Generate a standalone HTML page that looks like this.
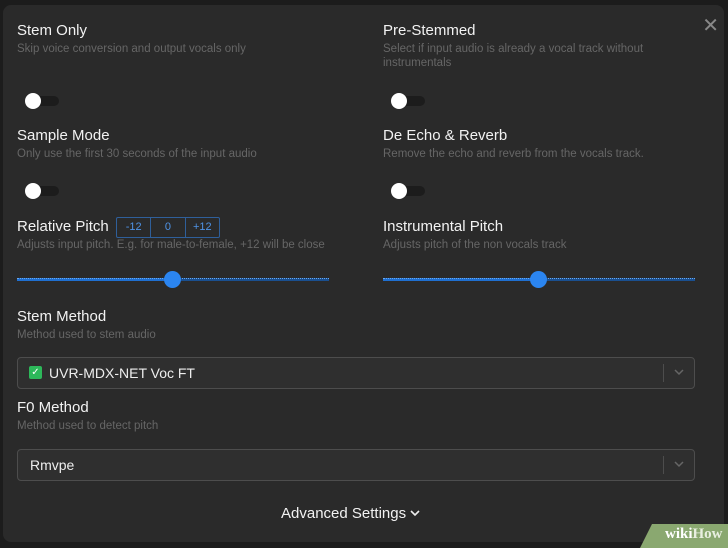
<!DOCTYPE html><html><head><style>
body{margin:0;width:728px;height:546px;background:#1c1c1c;font-family:"Liberation Sans",sans-serif;overflow:hidden;position:relative}
.p{position:absolute;left:3px;top:5px;width:721px;height:537px;background:#2a2a2a;border-radius:8px}
.t{position:absolute;color:#f2f2f2;font-size:15px}
.d{position:absolute;color:#666;font-size:11.5px;line-height:14px}
.tg{position:absolute;width:32px;height:12px}
.tg:before{content:"";position:absolute;left:8px;top:1px;width:26px;height:10px;border-radius:5px;background:#1c1c1c}
.tg:after{content:"";position:absolute;left:0;top:-2px;width:16px;height:16px;border-radius:50%;background:#fff}
.sl{position:absolute;height:2px;border-top:1px dotted #6aa8ef}
.kn{position:absolute;width:17px;height:17px;border-radius:50%;background:#2b85f0}
.sel{position:absolute;left:17px;width:676px;height:30px;border:1px solid #4d4d4d;border-radius:4px;background:#2f2f2f}
.sel .v{position:absolute;left:12px;top:7px;color:#eee;font-size:14px}
.sel .s{position:absolute;right:30px;top:6px;width:1px;height:18px;background:#4d4d4d}
.sel svg{position:absolute;right:10px;top:11px}
</style></head><body><div class="p"></div>
<div style="position:absolute;right:9px;top:16px;color:#888;font-size:20px;line-height:20px">✕</div>
<div class="t" style="left:17px;top:22px">Stem Only</div>
<div class="d" style="left:17px;top:42px">Skip voice conversion and output vocals only</div>
<div class="tg" style="left:25px;top:95px"></div>
<div class="t" style="left:17px;top:127px">Sample Mode</div>
<div class="d" style="left:17px;top:147px">Only use the first 30 seconds of the input audio</div>
<div class="tg" style="left:25px;top:185px"></div>
<div class="t" style="left:17px;top:218px">Relative Pitch</div>
<div style="position:absolute;left:116px;top:217px;width:102px;height:19px;border:1px solid #2f5f9a;border-radius:2px;display:flex;color:#4f93e6;font-size:11px;line-height:19px;text-align:center"><span style="flex:1;border-right:1px solid #2f5f9a">-12</span><span style="flex:1;border-right:1px solid #2f5f9a">0</span><span style="flex:1">+12</span></div>
<div class="d" style="left:17px;top:238px">Adjusts input pitch. E.g. for male-to-female, +12 will be close</div>
<div class="sl" style="left:17px;top:278px;width:312px;background:linear-gradient(90deg,#1f6fd0 50%,#1a4f8f 50%)"></div>
<div class="kn" style="left:164px;top:271px"></div>
<div class="t" style="left:383px;top:22px">Pre-Stemmed</div>
<div class="d" style="left:383px;top:42px">Select if input audio is already a vocal track without<br>instrumentals</div>
<div class="tg" style="left:391px;top:95px"></div>
<div class="t" style="left:383px;top:127px">De Echo &amp; Reverb</div>
<div class="d" style="left:383px;top:147px">Remove the echo and reverb from the vocals track.</div>
<div class="tg" style="left:391px;top:185px"></div>
<div class="t" style="left:383px;top:218px">Instrumental Pitch</div>
<div class="d" style="left:383px;top:238px">Adjusts pitch of the non vocals track</div>
<div class="sl" style="left:383px;top:278px;width:312px;background:linear-gradient(90deg,#1f6fd0 50%,#1a4f8f 50%)"></div>
<div class="kn" style="left:530px;top:271px"></div>
<div class="t" style="left:17px;top:308px">Stem Method</div>
<div class="d" style="left:17px;top:328px">Method used to stem audio</div>
<div class="sel" style="top:357px"><span style="position:absolute;left:11px;top:8px;width:13px;height:13px;background:#2db85a;border-radius:2px;color:#fff;font-size:10px;line-height:13px;text-align:center">✓</span><span class="v" style="left:31px">UVR-MDX-NET Voc FT</span><span class="s"></span><svg width="10" height="7"><path d="M1 1l4 4 4-4" stroke="#666" stroke-width="1.5" fill="none"/></svg></div>
<div class="t" style="left:17px;top:399px">F0 Method</div>
<div class="d" style="left:17px;top:419px">Method used to detect pitch</div>
<div class="sel" style="top:449px"><span class="v">Rmvpe</span><span class="s"></span><svg width="10" height="7"><path d="M1 1l4 4 4-4" stroke="#666" stroke-width="1.5" fill="none"/></svg></div>
<div class="t" style="left:281px;top:505px">Advanced Settings <svg width="10" height="7" style="vertical-align:1px"><path d="M1 1l4 4 4-4" stroke="#eee" stroke-width="1.6" fill="none"/></svg></div>
<div style="position:absolute;left:640px;top:524px;width:90px;height:24px;background:#8aa870;clip-path:polygon(12px 0,100% 0,100% 100%,0 100%)"></div>
<div style="position:absolute;left:665px;top:526px;font-family:'Liberation Serif',serif;font-weight:bold;font-size:15px;color:#fff">wiki<span style="color:#e8efe0">How</span></div>
</body></html>
